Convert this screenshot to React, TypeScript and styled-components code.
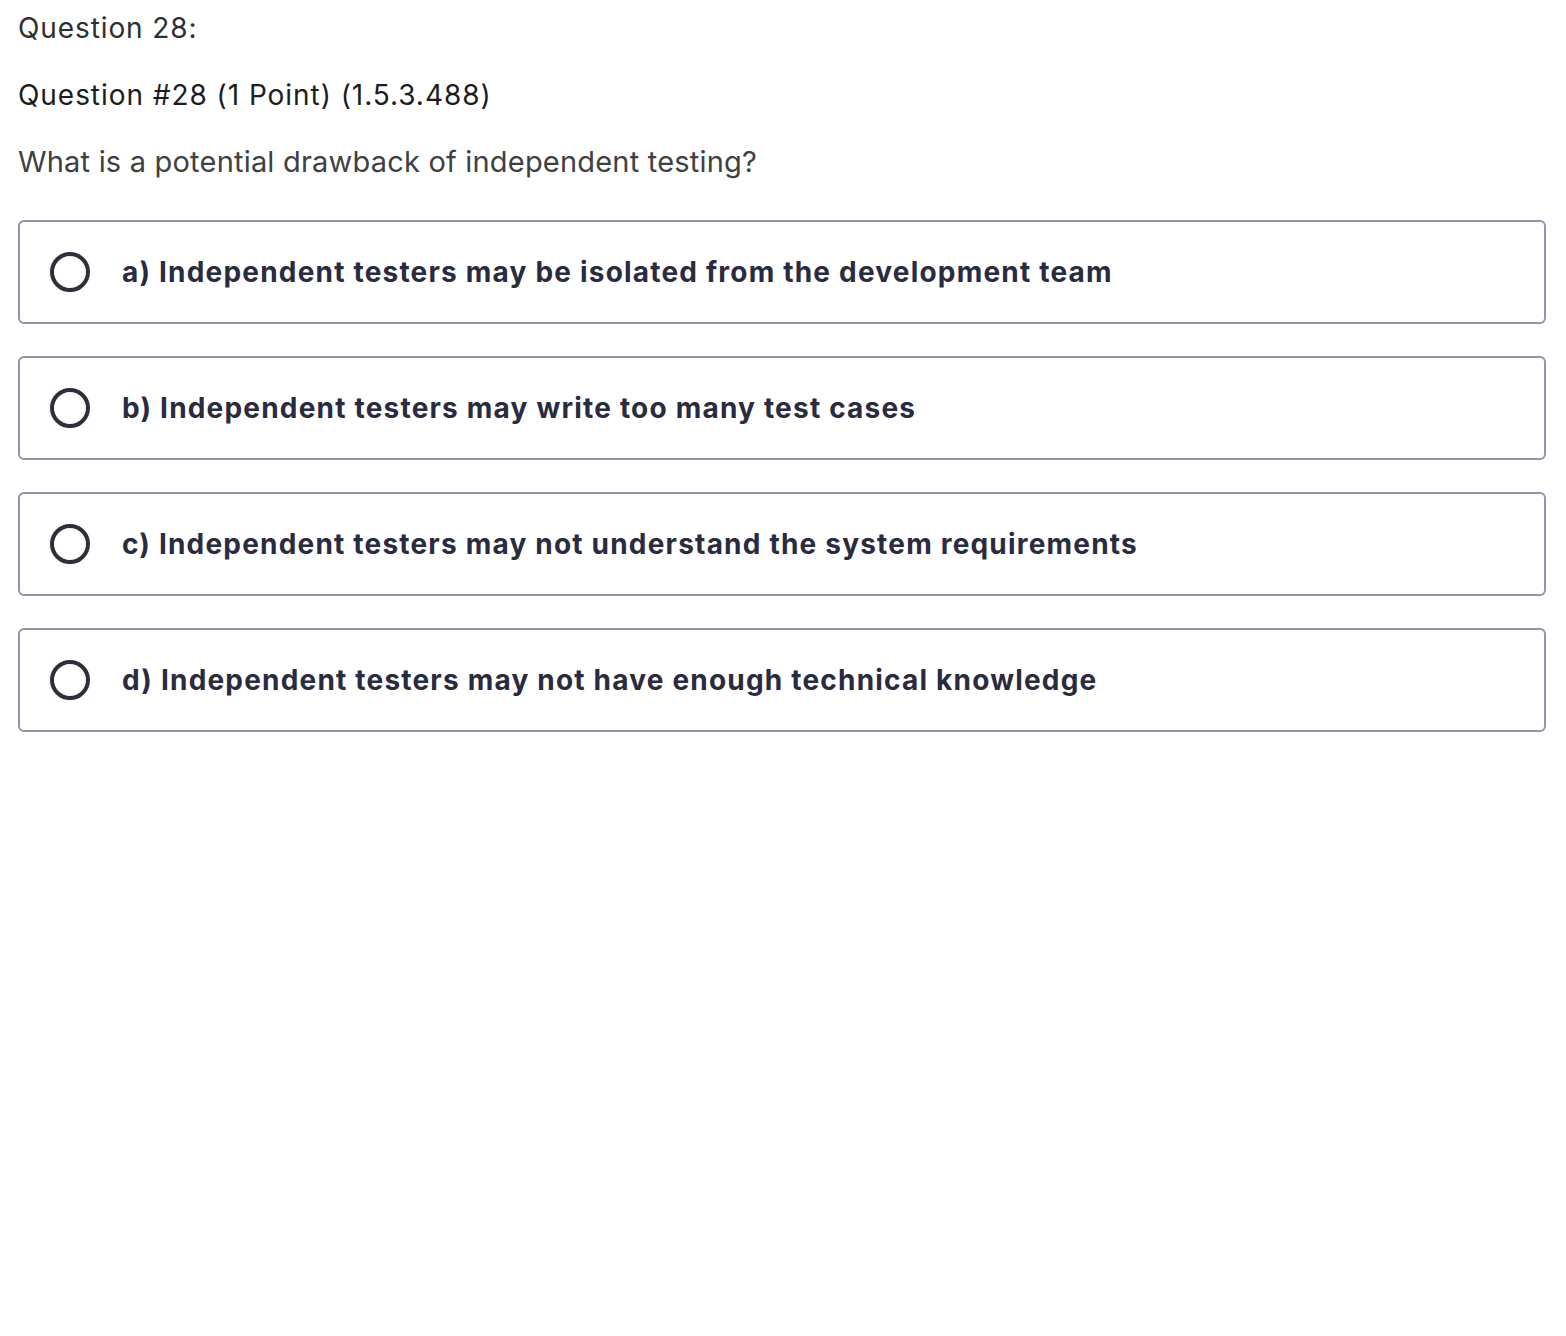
import React from 'react';
import styled, { createGlobalStyle } from 'styled-components';

const GlobalStyle = createGlobalStyle`
  body {
    margin: 0;
    background: #ffffff;
    font-family: Inter, "Noto Sans", sans-serif;
  }
`;

const Page = styled.div`
  padding: 8px 20px 0 18px;
`;

const Label = styled.div`
  font-size: 28px;
  line-height: 40px;
  color: #2d2f31;
  font-weight: 400;
  letter-spacing: 0.9px;
  margin-bottom: 27px;
`;

const Title = styled.div`
  font-size: 28px;
  line-height: 40px;
  color: #1c1d1f;
  font-weight: 400;
  letter-spacing: 0.95px;
  margin-bottom: 27px;
`;

const Prompt = styled.div`
  font-size: 29px;
  line-height: 40px;
  color: #3e4143;
  letter-spacing: 0.2px;
  margin-bottom: 38px;
`;

const Options = styled.div`
  display: flex;
  flex-direction: column;
  gap: 32px;
`;

const Option = styled.label`
  display: flex;
  align-items: center;
  gap: 32px;
  height: 100px;
  padding: 0 30px;
  border: 2px solid #9194ac;
  border-radius: 6px;
  cursor: pointer;
`;

const Radio = styled.span`
  box-sizing: border-box;
  width: 40px;
  height: 40px;
  border-radius: 50%;
  border: 4px solid #2d2f3b;
  flex-shrink: 0;
`;

const OptionText = styled.span`
  font-size: 28px;
  font-weight: 700;
  color: #2a2b3f;
  letter-spacing: 1.2px;
`;

const answers = [
  'a) Independent testers may be isolated from the development team',
  'b) Independent testers may write too many test cases',
  'c) Independent testers may not understand the system requirements',
  'd) Independent testers may not have enough technical knowledge',
];

function App() {
  return (
    <Page>
      <GlobalStyle />
      <Label>Question 28:</Label>
      <Title>Question #28 (1 Point) (1.5.3.488)</Title>
      <Prompt>What is a potential drawback of independent testing?</Prompt>
      <Options>
        {answers.map((text) => (
          <Option key={text}>
            <Radio />
            <OptionText>{text}</OptionText>
          </Option>
        ))}
      </Options>
    </Page>
  );
}

export default App;
